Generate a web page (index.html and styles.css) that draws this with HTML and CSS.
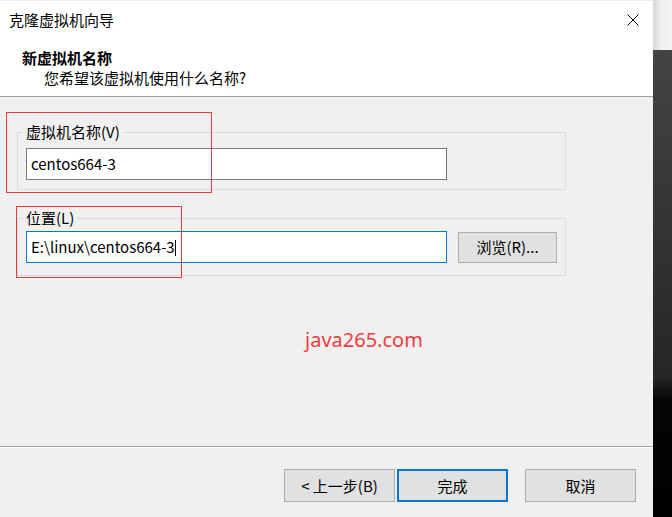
FILE: index.html
```html
<!DOCTYPE html>
<html lang="zh-CN">
<head>
<meta charset="utf-8">
<title>克隆虚拟机向导</title>
<link rel="stylesheet" href="styles.css">
</head>
<body>
<div class="screen">
  <div class="dialog">
    <div class="header">
      <div class="titlebar">
        <span class="title">克隆虚拟机向导</span>
        <span class="close" aria-label="关闭">
          <svg width="12" height="12" viewBox="0 0 12 12"><path d="M0.5 0.5 L11.5 11.5 M11.5 0.5 L0.5 11.5" stroke="#000" stroke-width="1" fill="none"/></svg>
        </span>
      </div>
      <div class="heading">新虚拟机名称</div>
      <div class="subheading">您希望该虚拟机使用什么名称?</div>
    </div>
    <div class="content">
      <fieldset class="group group-name">
        <legend>虚拟机名称(V)</legend>
        <div class="field">centos664-3</div>
      </fieldset>
      <fieldset class="group group-location">
        <legend>位置(L)</legend>
        <div class="row">
          <div class="field focused">E:\linux\centos664-3<span class="caret"></span></div>
          <button class="btn browse">浏览(R)...</button>
        </div>
      </fieldset>
      <div class="watermark">java265.com</div>
      <div class="mark mark-1"></div>
      <div class="mark mark-2"></div>
    </div>
    <div class="footer">
      <button class="btn">&lt; 上一步(B)</button>
      <button class="btn primary">完成</button>
      <button class="btn cancel">取消</button>
    </div>
  </div>
  <div class="backdrop">
    <div class="backdrop-top"></div>
    <div class="backdrop-dark"></div>
  </div>
</div>
</body>
</html>
```

FILE: styles.css
```css
* { box-sizing: border-box; }
html, body { margin: 0; padding: 0; }
body {
  font-family: "Noto Sans CJK SC", "Noto Sans", sans-serif;
  font-size: 15px;
  color: #000;
  background: #000;
}
.screen {
  display: flex;
  width: 672px;
  height: 517px;
  overflow: hidden;
}
.dialog {
  width: 653px;
  height: 517px;
  display: flex;
  flex-direction: column;
  background: #f0f0f0;
}
.header {
  height: 97px;
  background: #fff;
  border-top: 1px solid #ececec;
  border-bottom: 1px solid #a0a0a0;
  padding-top: 9px;
}
.titlebar {
  display: flex;
  align-items: center;
  justify-content: space-between;
  height: 20px;
  line-height: 20px;
  padding-left: 9px;
  padding-right: 14px;
}
.close { display: flex; width: 12px; height: 12px; }
.heading {
  margin-top: 18px;
  padding-left: 22px;
  line-height: 20px;
  font-weight: bold;
}
.subheading {
  padding-left: 44px;
  line-height: 20px;
}
.content {
  position: relative;
  flex: 1;
  padding-top: 25px;
}
.group {
  margin: 0 0 0 17px;
  width: 549px;
  border: 1px solid #dcdcdc;
  padding: 6px 8px 9px 8px;
  min-width: 0;
}
.group legend {
  padding: 0 3px;
  margin-left: -3px;
  line-height: 20px;
}
.group-location {
  margin-top: 18px;
  padding-top: 3px;
  padding-bottom: 12px;
}
.field {
  width: 421px;
  height: 32px;
  line-height: 30px;
  background: #fff;
  border: 1px solid #7a7a7a;
  padding-left: 4px;
  white-space: nowrap;
}
.field.focused { border-color: #0078d7; }
.caret {
  display: inline-block;
  width: 1px;
  height: 16px;
  background: #000;
  vertical-align: -3px;
}
.row {
  display: flex;
  align-items: center;
  gap: 11px;
}
.btn {
  font-family: inherit;
  font-size: 15px;
  color: #000;
  background: #e1e1e1;
  border: 1px solid #adadad;
  width: 111px;
  height: 33px;
  padding: 0;
  margin: 0;
  line-height: 20px;
}
.browse { width: 99px; height: 31px; }
.watermark {
  margin-top: 50px;
  margin-left: 305px;
  font-family: "Noto Sans", sans-serif;
  font-size: 20px;
  line-height: 28px;
  color: #f03c3c;
}
.mark {
  position: absolute;
  border: 1px solid #e83a3a;
}
.mark-1 { left: 6px; top: 15px; width: 206px; height: 81px; }
.mark-2 { left: 16px; top: 109px; width: 166px; height: 72px; }
.footer {
  height: 71px;
  border-top: 1px solid #a0a0a0;
  box-shadow: inset 0 1px 0 #fff;
  display: flex;
  justify-content: flex-end;
  align-items: flex-start;
  padding: 22px 17px 0 0;
}
.primary {
  margin-left: 2px;
  border: 2px solid #0078d7;
}
.cancel { margin-left: 17px; }
.backdrop {
  flex: 1;
  display: flex;
  flex-direction: column;
}
.backdrop-top {
  height: 50px;
  background: linear-gradient(to right, #d6d6d6, #eeeeee 40%, #f4f4f4);
}
.backdrop-dark {
  flex: 1;
  background: linear-gradient(to bottom, #444 0%, #333 40%, #262626 70%, #050505 75%, #000 100%);
}
```
